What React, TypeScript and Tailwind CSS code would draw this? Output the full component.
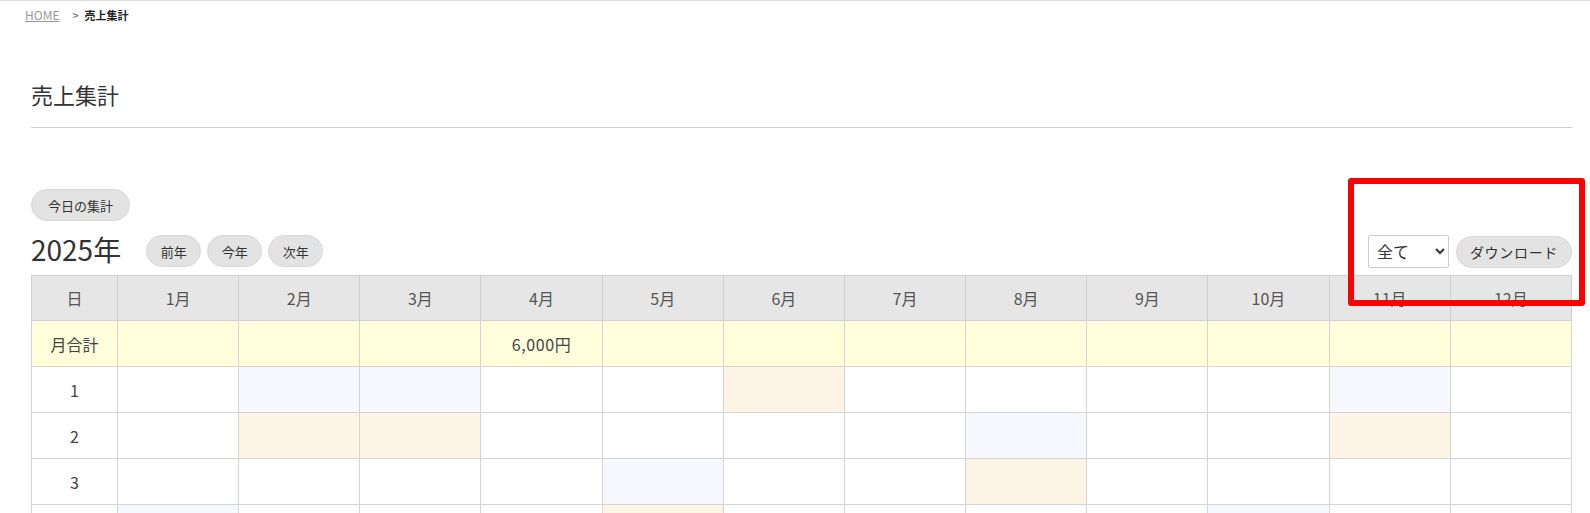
import React from 'react';

const YEAR = 2025;
const months = Array.from({ length: 12 }, (_, i) => i + 1);
const days = Array.from({ length: 31 }, (_, i) => i + 1);

const monthTotals: Record<number, string> = { 4: '6,000円' };

function cellClass(month: number, day: number) {
  const last = new Date(YEAR, month, 0).getDate();
  if (day > last) return 'bg-[#eeeeee]';
  const wd = new Date(YEAR, month - 1, day).getDay();
  if (wd === 6) return 'bg-[#f7f8fd]';
  if (wd === 0) return 'bg-[#fdf4e5]';
  return 'bg-white';
}

const pill =
  'h-[32px] px-[13px] rounded-full bg-[#e3e3e3] border border-[#d8d8d8] text-[13px] text-[#333] leading-none whitespace-nowrap flex items-center justify-center';

export default function App() {
  return (
    <div
      className="relative min-h-[513px] bg-white border-t border-[#dcdcdc] text-[#333]"
      style={{ fontFamily: '"Noto Sans CJK JP", "Noto Sans", sans-serif' }}
    >
      {/* breadcrumb */}
      <nav className="flex items-center pl-[25px] pt-[6px] text-[11px] leading-[16px]">
        <a className="text-[12px] text-[#999] underline">HOME</a>
        <span className="ml-[13px] text-[#555]">&gt;</span>
        <span className="ml-[6px] font-bold text-[#222]">売上集計</span>
      </nav>

      <main className="px-[31px] pr-[18px]">
        <h1 className="mt-[55px] text-[22px] leading-[32px] text-[#333]">売上集計</h1>
        <hr className="mt-[17px] border-t border-[#cccccc]" />

        <button className={`${pill} mt-[61px] h-[30px] w-[99px] px-0`}>今日の集計</button>

        <div className="mt-[13px] flex items-center justify-between h-[34px]">
          <div className="flex items-center">
            <span className="text-[28px] leading-none text-[#333] -mt-[5px]">2025年</span>
            <div className="ml-[25px] flex gap-[6px]">
              <button className={`${pill} w-[55px] px-0`}>前年</button>
              <button className={`${pill} w-[55px] px-0`}>今年</button>
              <button className={`${pill} w-[55px] px-0`}>次年</button>
            </div>
          </div>
          <div className="flex items-center gap-[7px]">
            <select className="h-[33px] w-[81px] border border-[#cccccc] rounded-[2px] bg-white pl-[4px] text-[16px] text-[#333]">
              <option>全て</option>
            </select>
            <button className={`${pill} w-[116px] h-[31px] px-0 text-[14px] tracking-[0.05em] mt-[2px]`}>
              ダウンロード
            </button>
          </div>
        </div>

        <table className="mt-[7px] w-[1541px] table-fixed border-collapse text-[16px] text-[#444]">
          <colgroup>
            <col className="w-[86px]" />
            {months.map((m) => (
              <col key={m} />
            ))}
          </colgroup>
          <thead>
            <tr className="h-[45px] bg-[#e6e6e6]">
              <th className="border border-[#d0d0d0] font-normal text-[#555]">日</th>
              {months.map((m) => (
                <th key={m} className="border border-[#d0d0d0] font-normal text-[#555]">
                  {m}月
                </th>
              ))}
            </tr>
          </thead>
          <tbody>
            <tr className="h-[46px] bg-[#ffffdc]">
              <td className="border border-[#d4d4d4] text-center">月合計</td>
              {months.map((m) => (
                <td key={m} className="border border-[#d4d4d4] text-center tracking-[0.04em]">
                  {monthTotals[m] ?? ''}
                </td>
              ))}
            </tr>
            {days.map((d) => (
              <tr key={d} className="h-[46px]">
                <td className="border border-[#d4d4d4] text-center bg-white">{d}</td>
                {months.map((m) => (
                  <td key={m} className={`border border-[#d4d4d4] ${cellClass(m, d)}`} />
                ))}
              </tr>
            ))}
          </tbody>
        </table>
      </main>

      {/* annotation highlight */}
      <div className="pointer-events-none absolute left-[1348px] top-[177px] h-[128px] w-[237px] rounded-[3px] border-[6px] border-[#ff0000]" />
    </div>
  );
}
